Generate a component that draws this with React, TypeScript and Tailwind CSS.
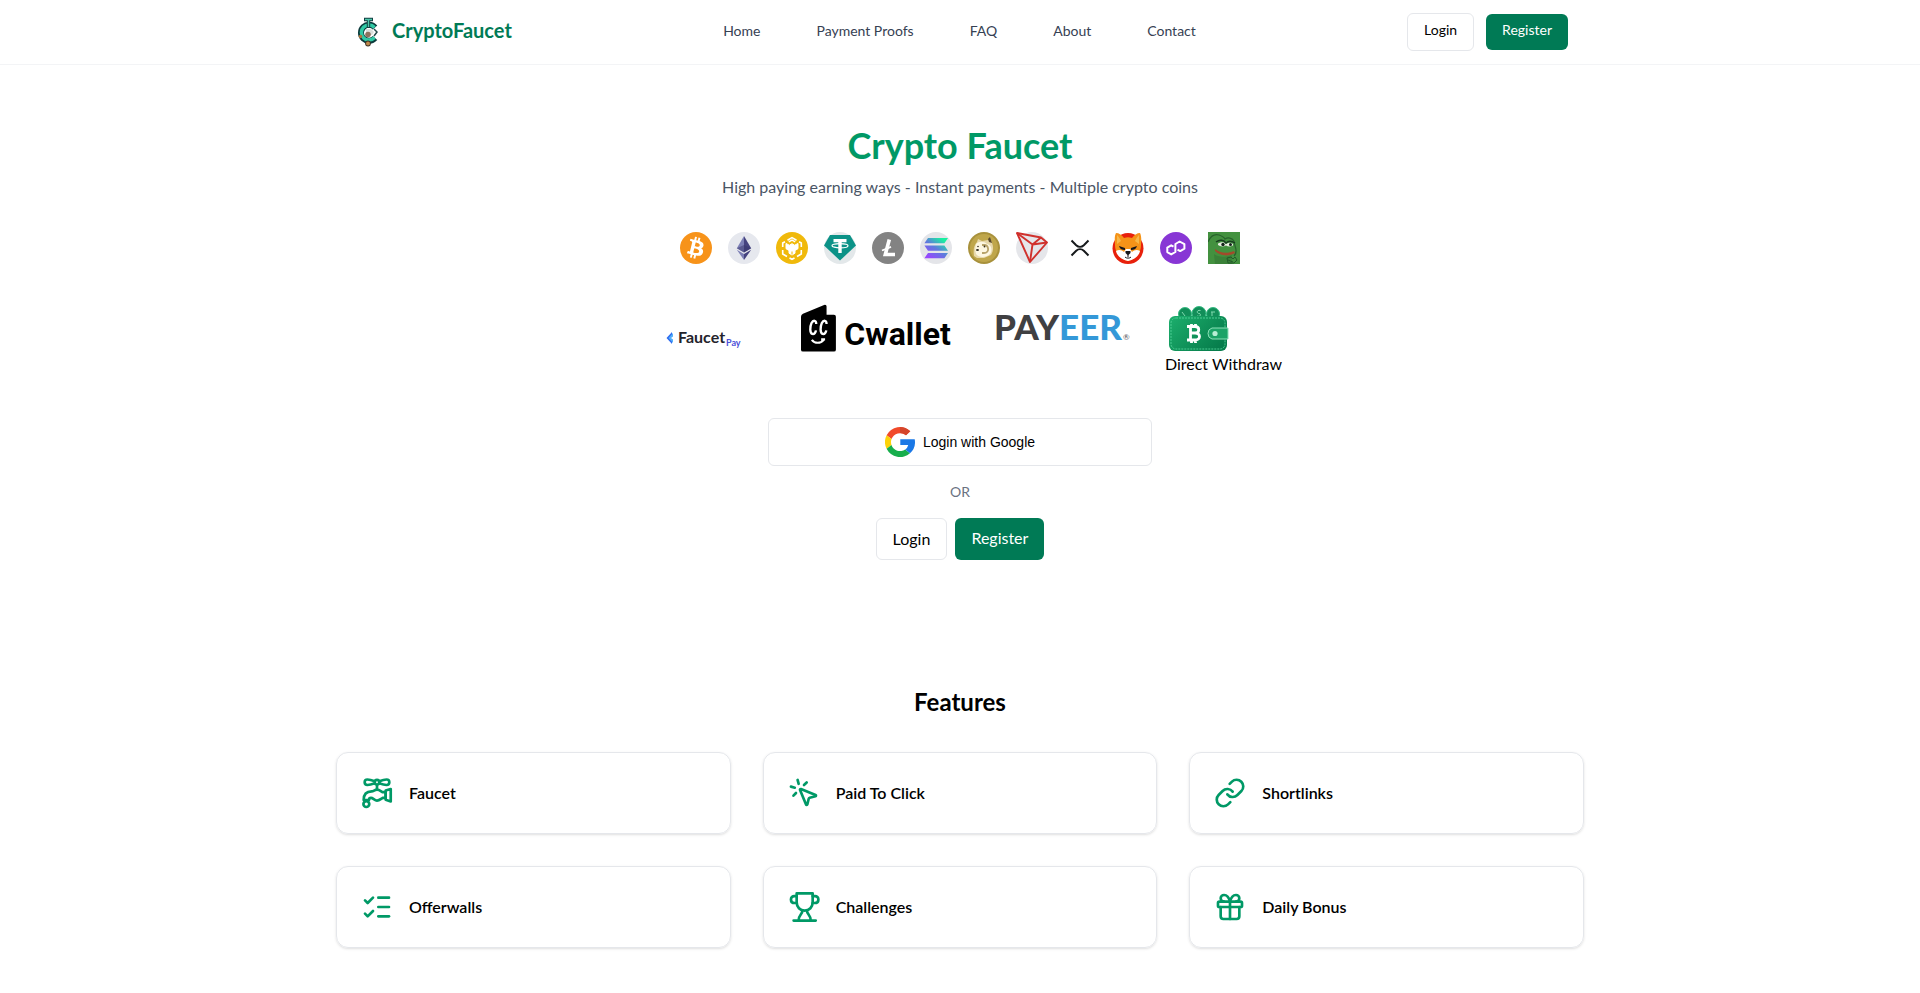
import { Gift, Link, ListChecks, MousePointerClick } from "lucide-react";
import { FaBitcoin } from "react-icons/fa";
import type { ReactNode } from "react";

const navLinks = ["Home", "Payment Proofs", "FAQ", "About", "Contact"];

const Logo = () => (
  <svg width="32" height="32" viewBox="0 0 32 32" fill="none" aria-hidden="true">
    <path d="M23 11.5A8 8 0 1 0 23 22" stroke="#0b3b3c" strokeWidth="6" />
    <path d="M22.5 11.5A7.5 7.5 0 1 0 22.5 21.5" stroke="#2fc9a4" strokeWidth="3.5" />
    <path d="M12 3.5h9M16.5 4v8" stroke="#123f40" strokeWidth="3.4" />
    <path d="M13 3.5h7M16.5 4v7" stroke="#4cc7ab" strokeWidth="1.4" />
    <path d="M14 13h5l3 3-2 3h-6z" fill="#d9dfdc" />
    <circle cx="16" cy="18.5" r="2.8" fill="#8c735d" />
    <circle cx="8.5" cy="20.5" r="1.8" fill="#a6763e" />
    <circle cx="16" cy="27.5" r="2.9" fill="#3f3327" />
    <circle cx="16" cy="27.5" r="2" fill="#c08b4d" />
    <path d="m22 13 3 3-3 4" stroke="#24494a" strokeWidth="1.5" />
  </svg>
);

const Bitcoin = () => (
  <span className="flex size-8 items-center justify-center overflow-hidden rounded-full bg-white">
    <FaBitcoin className="size-9 shrink-0 text-[#f7931a]" />
  </span>
);

const Ethereum = () => (
  <svg width="32" height="32" viewBox="0 0 32 32" aria-hidden="true">
    <circle cx="16" cy="16" r="16" fill="#e6e8ee" />
    <path d="M16 4 8.8 16.2 16 20.4z" fill="#7c7fb5" />
    <path d="m16 4 7.2 12.2L16 20.4z" fill="#45437f" />
    <path d="m8.8 16.2 7.2-3.3 7.2 3.3-7.2 4.2z" fill="#37366d" opacity=".5" />
    <path d="M8.8 17.8 16 28v-5.9z" fill="#7c7fb5" />
    <path d="M23.2 17.8 16 28v-5.9z" fill="#45437f" />
  </svg>
);

const Bnb = () => (
  <svg width="32" height="32" viewBox="0 0 32 32" fill="none" aria-hidden="true">
    <circle cx="16" cy="16" r="16" fill="#f0b90b" />
    <path
      d="m11.5 8.2 4.500-2.600 4.500 2.600M6.700 15v-4L9 9.700M23 9.700l2.300 1.300v4M25.300 18v4L21 24.500M18.500 26 16 27.300 13.500 26M11 24.500 6.700 22v-4"
      stroke="#fff"
      strokeWidth="1.6"
    />
    <path
      d="m10 11.500 3.400 1.700L16 11.700l2.600 1.500 3.400-1.700v5.200l-3 1.800v2.700L16 23l-3-1.800v-2.700l-3-1.800z"
      fill="#fff"
      stroke="#fff"
      strokeLinejoin="round"
    />
    <path d="m12.800 9.800 3.200-1.700 3.200 1.700" stroke="#fff" strokeWidth="1.4" />
    <path d="M16 19.500v3" stroke="#f0b90b" />
  </svg>
);

const Tether = () => (
  <svg width="32" height="32" viewBox="0 0 32 32" fill="none" aria-hidden="true">
    <circle cx="16" cy="16" r="16" fill="#e3e8ea" />
    <path d="M6 3h20l6 10.5L16 28.5 0 13.5z" fill="#0b9287" />
    <path d="M9.5 7h13v3.2h-4.8V21h-3.4V10.2H9.5z" fill="#fff" />
    <ellipse cx="16" cy="13.7" rx="8" ry="2.1" stroke="#fff" strokeWidth="1.2" />
  </svg>
);

const Litecoin = () => (
  <svg width="32" height="32" viewBox="0 0 32 32" fill="none" aria-hidden="true">
    <circle cx="16" cy="16" r="16" fill="#838383" />
    <path d="m17.3 7.5-4 15h9.7" stroke="#fff" strokeWidth="3.6" />
    <path d="m10 18.5 9-3.7" stroke="#fff" strokeWidth="1.8" />
  </svg>
);

const Solana = () => (
  <svg width="32" height="32" viewBox="0 0 32 32" aria-hidden="true">
    <defs>
      <linearGradient id="sol" x1="8" y1="27" x2="24" y2="5" gradientUnits="userSpaceOnUse">
        <stop offset=".05" stopColor="#9945ff" />
        <stop offset=".5" stopColor="#5d7cdb" />
        <stop offset=".9" stopColor="#19f0a0" />
      </linearGradient>
    </defs>
    <circle cx="16" cy="16" r="16" fill="#e4e5e9" />
    <path d="M8 6h20l-3.6 5.2h-20zM4.400 13.500h20l3.600 5.200H8zM8 21h20l-3.600 5.200h-20z" fill="url(#sol)" />
  </svg>
);

const Doge = () => (
  <svg width="32" height="32" viewBox="0 0 32 32" aria-hidden="true">
    <circle cx="16" cy="16" r="16" fill="#a8913b" />
    <circle cx="16" cy="16" r="14" fill="#bfa64b" />
    <path d="M6 24c-1-6 0-11 3-14l1-3 4 2 6-1 2-2 2 5c2 4 1 9-1 12l-7 3H9z" fill="#e7d8aa" />
    <path d="M8 12c3-3 8-3 11 0 6 1 6 10 0 12-4 2-9 1-11-2-1-3-1-7 0-10z" fill="#fdf7e2" />
    <path d="m20 7 2-2 2 6-3-1z" fill="#5b4a2c" />
    <path d="M14 13h2c5 0 6 8 0 8h-2" fill="none" stroke="#b8a36a" strokeWidth="1.8" />
    <circle cx="10" cy="14.5" r=".8" fill="#37301f" />
    <circle cx="16.5" cy="14.5" r=".9" fill="#37301f" />
    <ellipse cx="9.5" cy="18" rx="1.5" ry="1.1" fill="#2d291f" />
  </svg>
);

const Tron = () => (
  <svg width="32" height="32" viewBox="0 0 32 32" fill="none" aria-hidden="true">
    <circle cx="16" cy="16" r="16" fill="#e5e6ea" />
    <g stroke="#d0312d" strokeWidth="1.9" strokeLinejoin="round">
      <path d="M1 1 25 5.5l6 5L14 30z" />
      <path d="m1 1 15.5 11.5L14 30M16.5 12.5 25 5.5M16.5 12.5 31 10.5" />
    </g>
  </svg>
);

const Xrp = () => (
  <svg width="32" height="32" viewBox="0 0 32 32" fill="none" aria-hidden="true">
    <path
      d="m7.5 8.5 4.7 4.700c2.200 2.100 5.400 2.100 7.600 0l4.700-4.700M7.500 23.500l4.700-4.700c2.200-2.100 5.400-2.100 7.600 0l4.700 4.700"
      stroke="#16191b"
      strokeWidth="2"
    />
  </svg>
);

const Shiba = () => (
  <svg width="32" height="32" viewBox="0 0 32 32" aria-hidden="true">
    <circle cx="16" cy="16.5" r="15.5" fill="#e8200c" />
    <path d="M4 1c3 0 6 2 8 5 3-1 5-1 8 0 2-3 5-5 8-5 2 4 1 9 1 12 0 7-4 14-13 16C7 27 3 20 3 13 3 9 2 5 4 1z" fill="#f59318" />
    <path d="M5 3c2 2 3 4 4 6l-4 3zM27 3c-2 2-3 4-4 6l4 3z" fill="#f7b84a" />
    <path d="M4 19c3-2 6-1 8 1l2-3h4l2 3c2-2 5-3 8-1-1 5-6 9-12 10C10 28 5 24 4 19z" fill="#fff" />
    <path d="m7 14 6 2v2c-3 0-5-1-6-4zM25 14l-6 2v2c3 0 5-1 6-4z" fill="#17171b" />
    <path d="M13.5 19h5v2L16 23.5 13.5 21z" fill="#17171b" />
    <path d="M16 23v2m-3 0c1 1.500 5 1.500 6 0" stroke="#17171b" fill="none" />
  </svg>
);

const Polygon = () => (
  <svg width="32" height="32" viewBox="0 0 32 32" fill="none" aria-hidden="true">
    <circle cx="16" cy="16" r="16" fill="#8836d5" />
    <path
      d="m13.5 14.600-2.300-1.300-3.900 2.300v4.500l3.900 2.300 4.200-2.400V12l4.200-2.500 4.800 2.700v4.500l-4.200 2.400-2.700-1.500"
      stroke="#fff"
      strokeWidth="2"
      strokeLinejoin="round"
    />
  </svg>
);

const Pepe = () => (
  <svg width="32" height="32" viewBox="0 0 32 32" fill="none" aria-hidden="true">
    <path d="M0 0h32v32H0z" fill="#43913f" />
    <path d="M0 10C3 3 7 2 11 3c3 1 5 2 6 4 3-2 7-1 9 2l1 5c2 5 1 8-1 10" stroke="#28622c" strokeWidth="1.2" />
    <path d="M6 22c4 3 10 4 18 1v9H7z" fill="#3a8138" />
    <path d="M10 11.5c4-2 6-1.500 8 .5 3-2 5-1.500 7 0v1.500c-3 1.500-5 1-7 0-3 1.500-6 1-8-.5z" fill="#e7eee0" />
    <path d="M8 10c4-3 8-2 10 1 3-3 6-2 9 0" stroke="#183d20" strokeWidth="1.4" />
    <circle cx="15" cy="12.5" r="1.7" fill="#14221a" />
    <circle cx="22.5" cy="12.5" r="1.5" fill="#14221a" />
    <path d="M7 17c5 4 12 5 19 2l1 2c-6 4-15 3-20-2z" fill="#a24a2b" />
    <path d="m19 26 4-1 2 2 2-2 2 3-3 3h-6zM20 28l5 2" stroke="#235b2a" />
  </svg>
);

const coins: { name: string; icon: ReactNode }[] = [
  { name: "Bitcoin", icon: <Bitcoin /> },
  { name: "Ethereum", icon: <Ethereum /> },
  { name: "BNB", icon: <Bnb /> },
  { name: "Tether", icon: <Tether /> },
  { name: "Litecoin", icon: <Litecoin /> },
  { name: "Solana", icon: <Solana /> },
  { name: "Dogecoin", icon: <Doge /> },
  { name: "Tron", icon: <Tron /> },
  { name: "XRP", icon: <Xrp /> },
  { name: "Shiba Inu", icon: <Shiba /> },
  { name: "Polygon", icon: <Polygon /> },
  { name: "Pepe", icon: <Pepe /> },
];

const FaucetPay = () => (
  <svg width="131" height="68" viewBox="0 0 131 68">
    <path d="m34 28-5.500 6 5.500 6v-3.500L31.500 34l2.500-2.500z" fill="#2f6bf0" />
    <path d="M35 29v3.500L33 34l2 1.500V39l-4.500-5z" fill="#53aef8" />
    <text x="40" y="39" className="fill-[#23232b] font-['Lato'] text-[16px] font-bold">Faucet</text>
    <text x="88" y="42" className="fill-[#4b50d8] font-['Lato'] text-[9px] font-bold">Pay</text>
  </svg>
);

const Cwallet = () => (
  <div className="flex h-12 w-[150px] items-end gap-2">
    <svg width="36" height="48" viewBox="0 0 36 48" fill="none" aria-hidden="true">
      <path d="M0 12.5Q0 10.500 2 9.500L23.500 0.500Q26 0 26 2v8.500h7.500q2 0 2 2V46q0 2-2 2H2q-2 0-2-2z" fill="#000" />
      <path
        d="M15.5 20c0-4-3-4.500-4.800-1-1.800 4-1.800 10 .8 11 2 .5 3.500-1.500 3.700-3.500M26 20c0-4-3-4.500-4.800-1-1.800 4-1.800 10 .8 11 2 .5 3.500-1.500 3.700-3.500"
        stroke="#fff"
        strokeWidth="2.4"
      />
      <path d="M11 36c3 4 9 4 12 0M20.5 35.500h4" stroke="#fff" strokeWidth="2.2" />
    </svg>
    <span className="font-['Roboto',sans-serif] text-[32px] leading-9 font-bold">Cwallet</span>
  </div>
);

const Payeer = () => (
  <svg width="150" height="48" viewBox="0 0 150 48">
    <text x="11" y="36" className="font-['Lato'] text-[35px] font-black">
      <tspan className="fill-[#404042]">PAY</tspan>
      <tspan className="fill-[#3498d8]">EER</tspan>
    </text>
    <text x="140" y="36" className="fill-[#55565a] font-['Lato'] text-[8px]">®</text>
  </svg>
);

const WalletIcon = () => (
  <svg width="66" height="48" viewBox="0 0 66 48" fill="none" aria-hidden="true">
    <defs>
      <linearGradient id="wallet" x1="10" y1="8" x2="50" y2="48" gradientUnits="userSpaceOnUse">
        <stop stopColor="#1cae6c" />
        <stop offset="1" stopColor="#067c4b" />
      </linearGradient>
    </defs>
    <g fill="#128e59" stroke="#36bb82">
      <circle cx="20" cy="10" r="6.5" />
      <circle cx="48" cy="10" r="6.5" />
      <circle cx="34" cy="9.5" r="7" />
    </g>
    <path d="m17 8 3 4m26-4h4m-3 0v5M35.5 6.500c-4-1-4 3-1.500 3s2 4-2 2.500" stroke="#7fd9ae" />
    <rect x="4" y="12" width="58" height="35" rx="6" fill="url(#wallet)" />
    <rect x="6" y="14" width="54" height="31" rx="5" stroke="#4bcb92" strokeWidth="1" strokeDasharray="2 1" />
    <path d="M47 24h16v11H47q-4-1-4-5.500t4-5.500z" fill="#1ca367" stroke="#8be0b8" />
    <circle cx="50" cy="29.5" r="2.6" fill="#b9eed5" />
    <g transform="translate(21 20)" stroke="#fff" strokeWidth="2.8">
      <path d="M1 2.5h8c5 0 5 6.500 0 6.500H4.500M9 9c6 0 6 7 0 7H1M4.500 2.500V16M5.500 0v3M9.500 0v3M5.500 16v3M9.500 16v3" />
    </g>
  </svg>
);

const Google = () => (
  <svg width="30" height="30" viewBox="0 0 30 30" aria-hidden="true">
    <path d="M25.3 4.200A15 15 0 0 0 1.600 8.300l4.900 3.800A9.200 9.200 0 0 1 21 8.300z" fill="#f14a2a" />
    <path d="M15 0a15 15 0 0 1 10.3 4.200L21 8.300A9 9 0 0 0 15 6z" fill="#d5462b" />
    <path d="M1.6 8.300a15 15 0 0 0 0 13.400l4.900-3.800a9 9 0 0 1 0-5.800z" fill="#fcd209" />
    <path d="M1.6 21.700A15 15 0 0 0 25 26.200l-4.800-3.700A9 9 0 0 1 6.500 17.900z" fill="#17ae4c" />
    <path d="M15.3 12.300h14.400A15 15 0 0 1 25 26.200l-4.800-3.700a7 7 0 0 0 3-4.500h-7.900z" fill="#1a78e6" />
  </svg>
);

const FaucetIcon = () => (
  <svg
    width="32"
    height="32"
    viewBox="0 0 24 24"
    fill="none"
    stroke="currentColor"
    strokeWidth="2"
    strokeLinejoin="round"
    aria-hidden="true"
  >
    <circle cx="12" cy="3.9" r="1.7" />
    <path d="M10.4 3.200C8.500 2.500 6.500 1.900 4.800 1.900a2 2 0 0 0 0 4.100c1.700 0 3.700-.6 5.600-1.300M13.600 3.200c1.900-.7 3.900-1.300 5.600-1.300a2 2 0 0 1 0 4.100c-1.700 0-3.700-.6-5.600-1.300M12 5.600v4" />
    <path d="M2 17.300c0-4.300 2.200-6.500 6-6.500 1.500 0 2.200-1.300 4-1.300s3 1.300 4.200 1.900h2.300v4.300h-2.300c-1.200.6-2.400 2-4.200 2s-3-2-4.500-2c-1.200 0-1.500.6-1.500 1.600z" />
    <path d="M18.5 10.200 22.300 9v9.300l-3.800-1.200z" />
    <circle cx="4" cy="20.3" r="2.2" />
  </svg>
);

const TrophyIcon = () => (
  <svg
    width="32"
    height="32"
    viewBox="0 0 24 24"
    fill="none"
    stroke="currentColor"
    strokeWidth="2"
    strokeLinecap="round"
    strokeLinejoin="round"
    aria-hidden="true"
  >
    <path d="M6.5 1.800h12v6.700c0 3.500-2.500 6.200-6 6.200s-6-2.700-6-6.200z" />
    <path d="M6.5 3.800H4.700a2.500 2.500 0 0 0-2.500 2.500c0 1.600 1.200 2.700 2.800 2.700h1.500M18.500 3.800h1.800a2.500 2.500 0 0 1 2.500 2.500c0 1.600-1.200 2.700-2.800 2.700h-1.500" />
    <path d="M10.8 14.800c0 2.700-2.800 3.200-2.800 7M14.200 14.800c0 2.700 2.800 3.200 2.800 7M4.200 22.200h16.600" />
  </svg>
);

const features: { title: string; icon: ReactNode }[] = [
  { title: "Faucet", icon: <FaucetIcon /> },
  { title: "Paid To Click", icon: <MousePointerClick size={32} /> },
  { title: "Shortlinks", icon: <Link size={32} /> },
  { title: "Offerwalls", icon: <ListChecks size={32} /> },
  { title: "Challenges", icon: <TrophyIcon /> },
  { title: "Daily Bonus", icon: <Gift size={32} /> },
];

const Header = () => {
  return (
    <header className="border-b border-gray-100">
      <div className="mx-auto flex h-16 max-w-7xl items-center justify-between px-8">
        <a href="#" className="flex items-center gap-2 text-xl font-bold text-emerald-700">
          <Logo />
          <span className="pb-1">CryptoFaucet</span>
        </a>
        <nav className="flex items-center gap-8">
          {navLinks.map((link) => (
            <a key={link} href="#" className="px-3 pt-2 pb-2.5 text-sm text-gray-700">
              {link}
            </a>
          ))}
        </nav>
        <div className="flex items-center gap-3">
          <a href="#" className="rounded-md border border-gray-200 px-4 pt-1.5 pb-2.5 text-sm">
            Login
          </a>
          <a href="#" className="rounded-md bg-emerald-700 px-4 pt-1.5 pb-2.5 text-sm text-white">
            Register
          </a>
        </div>
      </div>
    </header>
  );
};

const App = () => {
  return (
    <div className="min-h-screen bg-white font-['Lato',sans-serif] text-black">
      <Header />
      <main>
        <section className="flex flex-col items-center px-4 pt-15">
          <h1 className="text-4xl font-bold text-emerald-600">Crypto Faucet</h1>
          <p className="mt-2.5 text-gray-600">High paying earning ways - Instant payments - Multiple crypto coins</p>
          <ul className="mt-[33px] flex flex-wrap justify-center gap-4">
            {coins.map((coin) => (
              <li key={coin.name} aria-label={coin.name}>
                {coin.icon}
              </li>
            ))}
          </ul>
          <div className="mt-10 flex flex-wrap items-start justify-center gap-8">
            <FaucetPay />
            <Cwallet />
            <Payeer />
            <div>
              <WalletIcon />
              <p>Direct Withdraw</p>
            </div>
          </div>
          <button
            type="button"
            className="mt-[42px] flex h-12 w-full max-w-sm items-center justify-center gap-2 rounded-md border border-gray-200 font-['Liberation_Sans',sans-serif] text-sm"
          >
            <Google />
            Login with Google
          </button>
          <p className="mt-4 text-sm text-gray-500">OR</p>
          <div className="mt-4 flex justify-center gap-2">
            <a href="#" className="rounded-md border border-gray-200 px-4 py-2">
              Login
            </a>
            <a href="#" className="rounded-md bg-emerald-700 px-4 py-2 text-white">
              Register
            </a>
          </div>
        </section>
        <section className="mx-auto mt-[126px] max-w-7xl px-4">
          <h2 className="text-center text-2xl font-bold">Features</h2>
          <div className="mt-[34px] grid grid-cols-1 gap-8 md:grid-cols-3">
            {features.map((feature) => (
              <article
                key={feature.title}
                className="flex items-center gap-4 rounded-xl border border-gray-200 p-6 shadow-sm"
              >
                <span className="text-emerald-600">{feature.icon}</span>
                <h3 className="font-semibold">{feature.title}</h3>
              </article>
            ))}
          </div>
        </section>
      </main>
    </div>
  );
};

export default App;
